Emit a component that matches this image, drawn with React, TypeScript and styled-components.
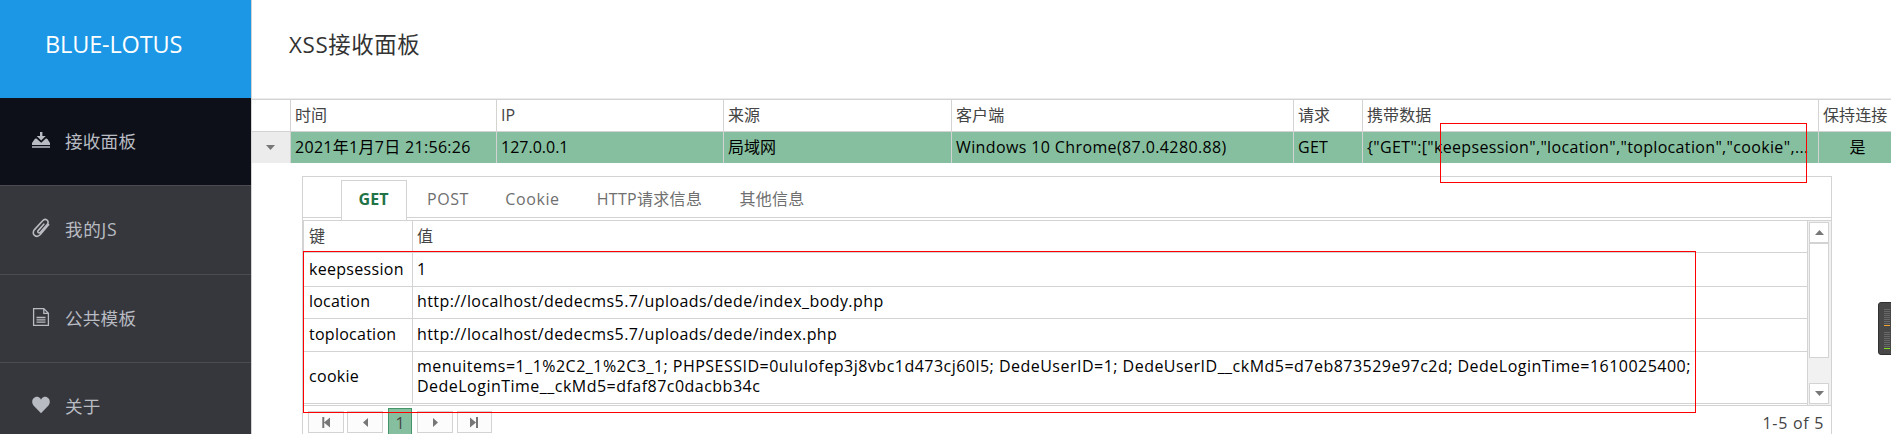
import React from "react";
import styled, { createGlobalStyle, css } from "styled-components";

const LINE = "#d3d3d3";

const Global = createGlobalStyle`
  * { box-sizing: border-box; }
  html, body { margin: 0; background: #fff; overflow: hidden; }
  body { font-family: "Open Sans", "Noto Sans CJK SC", sans-serif; font-size: 16px; color: #000; }
`;

const Page = styled.div`
  position: relative;
  display: flex;
  width: 1891px;
  height: 434px;
  overflow: hidden;
`;

const Sidebar = styled.nav`
  flex: 0 0 251px;
  background: #36373c;
`;

const Brand = styled.div`
  height: 98px;
  padding: 0 0 11px 45px;
  display: flex;
  align-items: center;
  background: #1b97e5;
  color: #fff;
  font-size: 23.5px;
  letter-spacing: -0.15px;
`;

const MenuItem = styled.div<{ $height: number; $active?: boolean }>`
  height: ${(p) => p.$height}px;
  padding: 0 0 2px 32px;
  display: flex;
  align-items: center;
  gap: 15px;
  border-bottom: 1px solid #4b4c51;
  background: ${(p) => (p.$active ? "#0d1018" : "transparent")};
  color: #b8bbc2;
  font-size: 17.6px;
  svg { display: block; flex: 0 0 18px; margin-bottom: 2px; }
`;

const MenuLabel = styled.span<{ $spacing?: number }>`
  line-height: 24px;
  letter-spacing: ${(p) => p.$spacing ?? 0.2}px;
`;

const Main = styled.main`
  flex: 1;
  min-width: 0;
  border-left: 1px solid ${LINE};
`;

const Title = styled.h1`
  margin: 0;
  height: 99px;
  padding: 0 0 11px 37px;
  display: flex;
  align-items: center;
  border-bottom: 1px solid #ececec;
  color: #333;
  font-weight: 400;
  font-size: 22.4px;
  letter-spacing: 0.6px;
`;

const GridRow = styled.div<{ $selected?: boolean }>`
  display: grid;
  grid-template-columns: 39px 206px 227px 228px 342px 69px 456px 73px;
  height: ${(p) => (p.$selected ? 31 : 33)}px;
  ${(p) =>
    p.$selected
      ? css`background: #86bf9f; color: #000;`
      : css`border-top: 1px solid ${LINE}; border-bottom: 1px solid ${LINE}; color: #444;`}
`;

const Cell = styled.div<{ $spacing?: number; $center?: boolean }>`
  min-width: 0;
  border-right: 1px solid ${LINE};
  padding: 0 0 0 4px;
  line-height: 31px;
  font-size: 16px;
  white-space: nowrap;
  overflow: hidden;
  text-align: ${(p) => (p.$center ? "center" : "left")};
  letter-spacing: ${(p) => p.$spacing ?? 0}px;
  &:last-child { border-right: 0; }
`;

const Expander = styled.div`
  display: flex;
  align-items: center;
  justify-content: center;
  padding-right: 1px;
  border-right: 1px solid ${LINE};
  background: #ececec;
  color: #777;
`;

const HeadCorner = styled.div`
  border-right: 1px solid ${LINE};
`;

const Detail = styled.section`
  margin: 13px 0 0 50px;
  width: 1530px;
  height: 270px;
  border: 1px solid ${LINE};
`;

const Tabs = styled.div`
  display: flex;
  height: 41px;
  padding: 3px 0 0 38px;
  border-bottom: 1px solid ${LINE};
  margin-bottom: 2px;
`;

const Tab = styled.div<{ $width: number; $active?: boolean; $spacing?: number }>`
  width: ${(p) => p.$width}px;
  height: ${(p) => (p.$active ? 40 : 37)}px;
  text-align: center;
  line-height: 38px;
  font-size: 16px;
  letter-spacing: ${(p) => p.$spacing ?? 0}px;
  white-space: nowrap;
  color: #6f6f6f;
  ${(p) =>
    p.$active &&
    css`
      padding-right: 1px;
      border: 1px solid ${LINE};
      border-bottom: 0;
      background: #fff;
      color: #217346;
      font-weight: 700;
      line-height: 36px;
    `}
`;

const InnerGrid = styled.div`
  display: flex;
  height: 186px;
  border: 1px solid ${LINE};
  border-right: 0;
`;

const Records = styled.div`
  flex: 1;
`;

const Record = styled.div<{ $height: number; $head?: boolean }>`
  display: grid;
  grid-template-columns: 109px 1fr;
  height: ${(p) => p.$height}px;
  border-bottom: 1px solid ${LINE};
  color: ${(p) => (p.$head ? "#444" : "#000")};
`;

const RecordCell = styled.div<{ $spacing?: number; $lift?: number }>`
  display: flex;
  align-items: center;
  padding: 0 4px ${(p) => 2 + (p.$lift ?? 0)}px 4px;
  font-size: 16px;
  line-height: 20px;
  letter-spacing: ${(p) => p.$spacing ?? 0}px;
  white-space: pre;
  &:first-child { padding-left: 5px; border-right: 1px solid ${LINE}; }
`;

const ScrollBar = styled.div`
  flex: 0 0 24px;
  display: flex;
  flex-direction: column;
  padding: 1px 2px 1px 1px;
  border-left: 1px solid ${LINE};
  background: #f1f1f1;
`;

const ScrollButton = styled.div`
  height: 21px;
  display: flex;
  align-items: center;
  justify-content: center;
  border: 1px solid ${LINE};
  background: #fff;
  color: #777;
`;

const ScrollThumb = styled.div`
  height: 115px;
  margin-bottom: 25px;
  border: 1px solid ${LINE};
  background: #fff;
`;

const Pager = styled.div`
  display: flex;
  align-items: flex-start;
  height: 28px;
  padding: 2px 7px 0 5px;
`;

const PagerButton = styled.div<{ $width?: number }>`
  width: ${(p) => p.$width ?? 36}px;
  height: 22px;
  margin: 3px 0 0;
  display: flex;
  align-items: center;
  justify-content: center;
  border: 1px solid ${LINE};
  background: #fcfcfc;
  color: #777;
  & + & { margin-left: 3px; }
  &:nth-child(5) { margin-left: 4px; }
`;

const PagerCurrent = styled.div`
  width: 24px;
  height: 30px;
  margin: 0 5px;
  border: 1px solid #439467;
  background: #86bf9f;
  color: #444;
  text-align: center;
  line-height: 28px;
`;

const PagerInfo = styled.div`
  margin-left: auto;
  line-height: 30px;
  color: #444;
  font-size: 16px;
  letter-spacing: 0.7px;
`;

const Highlight = styled.div<{ $x: number; $y: number; $w: number; $h: number }>`
  position: absolute;
  left: ${(p) => p.$x}px;
  top: ${(p) => p.$y}px;
  width: ${(p) => p.$w}px;
  height: ${(p) => p.$h}px;
  border: 1px solid #f00;
`;

const Meter = styled.div`
  position: absolute;
  left: 1878px;
  top: 302px;
  width: 20px;
  height: 53px;
  padding: 6px 0 0 5px;
  border: 1px solid #303030;
  border-radius: 3px;
  background: #484848;
`;

const Bars = styled.div<{ $height: number; $color: string }>`
  width: 6px;
  height: ${(p) => p.$height}px;
  margin-bottom: 6px;
  border-bottom: 1px solid ${(p) => p.$color};
  background: repeating-linear-gradient(#686868 0 1px, #484848 1px 2px);
`;

type Direction = "up" | "down" | "left" | "right";
const arrowPaths: Record<Direction, string> = {
  up: "M0 7 4.5 2 9 7z",
  down: "M0 2h9L4.5 7z",
  left: "M7 0v9L2 4.5z",
  right: "M2 0v9l5-4.5z",
};

const Arrow = ({ to }: { to: Direction }) => (
  <svg width="9" height="9" viewBox="0 0 9 9"><path fill="currentColor" d={arrowPaths[to]} /></svg>
);

const EdgeArrow = ({ last }: { last?: boolean }) => (
  <svg width="9" height="11" viewBox="0 0 9 11">
    <path fill="currentColor" d={last ? "M0 .5v10l6-5zM6 0h2v11H6z" : "M8 .5v10L2 5.500zM.3 0h2v11h-2z"} />
  </svg>
);

const InboxIcon = () => (
  <svg width="18" height="18" viewBox="0 0 18 18" fill="currentColor">
    <path d="M8 1h2.400v4h3.300L9.200 9.500 4.700 5H8zM0 14v-2L2.600 8.200Q3 7.600 3.800 7.600h.7l4.700 4.200 4.600-4.200h.6q.8 0 1.200.6L18 12v2zM0 15.200h18v1.500H0z" />
  </svg>
);

const ClipIcon = () => (
  <svg width="18" height="20" viewBox="0 0 18 20" fill="none" stroke="currentColor" strokeWidth="1.600" strokeLinecap="round">
    <path d="M11.800 6.200 6.200 12.600c-1.300 1.700.8 3.200 2.200 1.600l6.700-7.600c3-3.800-1.700-7.200-4.700-3.600L2.500 11.600c-3.800 4.700 2 9.100 5.800 4.900l8.300-9.800" />
  </svg>
);

const DocIcon = () => (
  <svg width="18" height="20" viewBox="0 0 18 20" fill="none" stroke="currentColor" strokeWidth="1.300">
    <path d="M1.600 1.600h10.200l4.600 4.700v12.100H1.600zM11.800 1.600v4.700h4.600" />
    <path d="M4.500 10.500h9M4.500 12.800h9M4.500 15.100h9" />
  </svg>
);

const HeartIcon = () => (
  <svg width="18" height="18" viewBox="0 0 18 18" fill="currentColor">
    <path d="M9 17.300 1.500 9.500C-2 5 2.200-.8 6.800 1.300 7.900 1.800 8.600 2.700 9 3.700c.4-1 1.100-1.900 2.200-2.400 4.600-2.100 8.800 3.700 5.300 8.200z" />
  </svg>
);

const menu = [
  { label: "接收面板", icon: <InboxIcon />, height: 88, active: true },
  { label: "我的JS", icon: <ClipIcon />, height: 89, spacing: 0.7 },
  { label: "公共模板", icon: <DocIcon />, height: 88 },
  { label: "关于", icon: <HeartIcon />, height: 88 },
];

const records = [
  { key: "keepsession", keySpacing: 0.3, value: "1", spacing: 0, height: 34 },
  {
    key: "location",
    keySpacing: 0.22,
    value: "http://localhost/dedecms5.7/uploads/dede/index_body.php",
    spacing: 0.42,
    height: 32,
    lift: 1,
  },
  {
    key: "toplocation",
    keySpacing: 0.26,
    value: "http://localhost/dedecms5.7/uploads/dede/index.php",
    spacing: 0.42,
    height: 33,
  },
  {
    key: "cookie",
    keySpacing: 0.3,
    value:
      "menuitems=1_1%2C2_1%2C3_1; PHPSESSID=0ululofep3j8vbc1d473cj60l5; DedeUserID=1; DedeUserID__ckMd5=d7eb873529e97c2d; DedeLoginTime=1610025400;\nDedeLoginTime__ckMd5=dfaf87c0dacbb34c",
    spacing: 0.48,
    height: 52,
    lift: 1,
  },
];

export default function App() {
  return (
    <>
      <Global />
      <Page>
        <Sidebar>
          <Brand>BLUE-LOTUS</Brand>
          {menu.map((m) => (
            <MenuItem key={m.label} $height={m.height} $active={m.active}>
              {m.icon}
              <MenuLabel $spacing={m.spacing}>{m.label}</MenuLabel>
            </MenuItem>
          ))}
        </Sidebar>
        <Main>
          <Title>XSS接收面板</Title>
          <GridRow>
            <HeadCorner />
            {["时间", "IP", "来源", "客户端", "请求", "携带数据", "保持连接"].map((h) => (
              <Cell key={h} $spacing={0.1}>{h}</Cell>
            ))}
          </GridRow>
          <GridRow $selected>
            <Expander><Arrow to="down" /></Expander>
            <Cell $spacing={0.3}>2021年1月7日 21:56:26</Cell>
            <Cell>127.0.0.1</Cell>
            <Cell>局域网</Cell>
            <Cell $spacing={0.38}>Windows 10 Chrome(87.0.4280.88)</Cell>
            <Cell $spacing={0.3}>GET</Cell>
            <Cell $spacing={0.34}>{'{"GET":["keepsession","location","toplocation","cookie",...'}</Cell>
            <Cell $center>是</Cell>
          </GridRow>
          <Detail>
            <Tabs>
              <Tab $width={66} $active>GET</Tab>
              <Tab $width={82} $spacing={0.6}>POST</Tab>
              <Tab $width={87} $spacing={0.6}>Cookie</Tab>
              <Tab $width={147} $spacing={0.3}>HTTP请求信息</Tab>
              <Tab $width={98} $spacing={0.2}>其他信息</Tab>
            </Tabs>
            <InnerGrid>
              <Records>
                <Record $height={32} $head>
                  <RecordCell>键</RecordCell>
                  <RecordCell>值</RecordCell>
                </Record>
                {records.map((r) => (
                  <Record key={r.key} $height={r.height}>
                    <RecordCell $spacing={r.keySpacing} $lift={r.lift}>{r.key}</RecordCell>
                    <RecordCell $spacing={r.spacing} $lift={r.lift}>{r.value}</RecordCell>
                  </Record>
                ))}
              </Records>
              <ScrollBar>
                <ScrollButton><Arrow to="up" /></ScrollButton>
                <ScrollThumb />
                <ScrollButton><Arrow to="down" /></ScrollButton>
              </ScrollBar>
            </InnerGrid>
            <Pager>
              <PagerButton><EdgeArrow /></PagerButton>
              <PagerButton><Arrow to="left" /></PagerButton>
              <PagerCurrent>1</PagerCurrent>
              <PagerButton><Arrow to="right" /></PagerButton>
              <PagerButton $width={35}><EdgeArrow last /></PagerButton>
              <PagerInfo>1-5 of 5</PagerInfo>
            </Pager>
          </Detail>
        </Main>
        <Highlight $x={1440} $y={123} $w={367} $h={60} />
        <Highlight $x={303} $y={251} $w={1393} $h={162} />
        <Meter>
          <Bars $height={17} $color="#f0a030" />
          <Bars $height={17} $color="#80e020" />
        </Meter>
      </Page>
    </>
  );
}
